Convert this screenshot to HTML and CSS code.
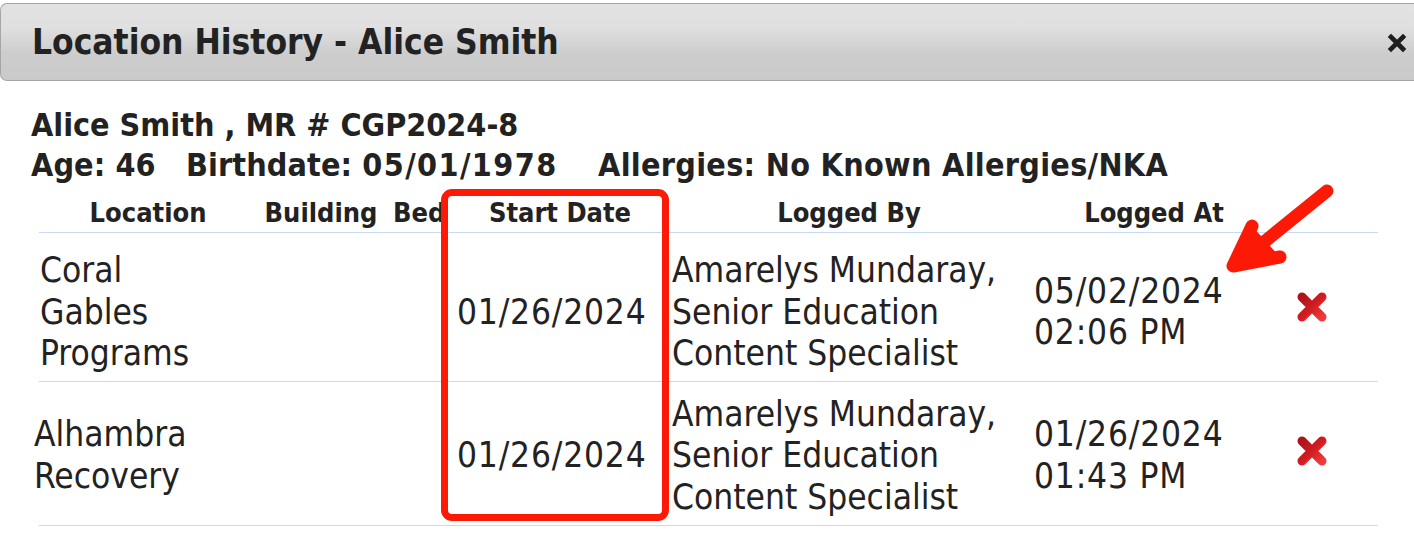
FILE: index.html
```html
<!DOCTYPE html>
<html lang="en">
<head>
<meta charset="utf-8">
<title>Location History - Alice Smith</title>
<link rel="stylesheet" href="styles.css">
</head>
<body>
<div class="dialog">
  <div class="titlebar">
    <span class="title">Location History - Alice Smith</span>
    <button class="close" type="button" aria-label="close">
      <svg width="20" height="20" viewBox="0 0 20 20"><path d="M4 4 L16 16 M16 4 L4 16" stroke="#1e1e1e" stroke-width="4.6" stroke-linecap="square" fill="none"/></svg>
    </button>
  </div>
  <div class="content">
    <div class="patient">
      <div class="pline">Alice Smith , MR # CGP2024-8</div>
      <div class="pline pline-info">Age: 46&nbsp;&nbsp;&nbsp;Birthdate: <span class="bnum">05/01/1978</span>&nbsp;&nbsp;&nbsp;&nbsp;<span class="allergy">Allergies: No Known Allergies/NKA</span></div>
    </div>
    <table class="history">
      <colgroup>
        <col class="c-loc"><col class="c-bld"><col class="c-bed"><col class="c-start"><col class="c-by"><col class="c-at"><col class="c-del">
      </colgroup>
      <thead>
        <tr>
          <th class="th-loc">Location</th>
          <th>Building</th>
          <th class="th-bed">Bed</th>
          <th>Start Date</th>
          <th>Logged By</th>
          <th>Logged At</th>
          <th></th>
        </tr>
      </thead>
      <tbody>
        <tr class="row-first">
          <td class="loc"><div class="loc-text">Coral<br>Gables<br>Programs</div></td>
          <td></td>
          <td></td>
          <td class="start"><span class="num">01/26/2024</span></td>
          <td class="by">Amarelys Mundaray,<br>Senior Education<br>Content Specialist</td>
          <td class="at"><span class="num">05/02/2024</span><br><span class="num">02:06 PM</span></td>
          <td class="del"><svg class="xicon" width="36" height="36" viewBox="0 0 36 36"><defs><linearGradient id="xg1" x1="0" y1="0" x2="1" y2="1"><stop offset="0" stop-color="#b0121a"/><stop offset="0.5" stop-color="#d01c22"/><stop offset="1" stop-color="#f03a3a"/></linearGradient></defs><path d="M8 8 L28 28 M28 8 L8 28" stroke="url(#xg1)" stroke-width="9" stroke-linecap="round" fill="none"/></svg></td>
        </tr>
        <tr>
          <td class="loc"><div class="loc-text loc-out">Alhambra<br>Recovery</div></td>
          <td></td>
          <td></td>
          <td class="start"><span class="num">01/26/2024</span></td>
          <td class="by">Amarelys Mundaray,<br>Senior Education<br>Content Specialist</td>
          <td class="at"><span class="num">01/26/2024</span><br><span class="num">01:43 PM</span></td>
          <td class="del"><svg class="xicon" width="36" height="36" viewBox="0 0 36 36"><defs><linearGradient id="xg2" x1="0" y1="0" x2="1" y2="1"><stop offset="0" stop-color="#b0121a"/><stop offset="0.5" stop-color="#d01c22"/><stop offset="1" stop-color="#f03a3a"/></linearGradient></defs><path d="M8 8 L28 28 M28 8 L8 28" stroke="url(#xg2)" stroke-width="9" stroke-linecap="round" fill="none"/></svg></td>
        </tr>
      </tbody>
    </table>
    <div class="highlight"></div>
    <svg class="arrow" width="160" height="120" viewBox="1210 170 160 120">
      <g fill="none" stroke="#fc1a06" stroke-width="13" stroke-linecap="round" stroke-linejoin="round">
        <path d="M1327 193 L1248 257"/>
        <path d="M1252 228 L1233 268 L1280 259"/>
      </g>
      <path d="M1252 228 L1233 268 L1280 259 Z" fill="#fc1a06"/>
    </svg>
  </div>
</div>
</body>
</html>
```

FILE: styles.css
```css
* { box-sizing: border-box; }

html, body {
  margin: 0;
  padding: 0;
  background: #ffffff;
  overflow: hidden;
}

body {
  font-family: "DejaVu Sans Condensed", "DejaVu Sans", Verdana, sans-serif;
  font-stretch: condensed;
  color: #222222;
}

.dialog {
  width: 1440px;
  padding-top: 3px;
  position: relative;
}

.titlebar {
  height: 78px;
  border: 1px solid #a6a6a6;
  border-right: none;
  border-radius: 7px 0 0 7px;
  background: linear-gradient(to bottom, #e2e2e2 0%, #e0e0e0 30%, #cdcdcd 65%, #cacaca 100%);
  display: flex;
  align-items: center;
  padding-left: 31px;
  padding-right: 13px;
  width: 1420px;
}

.title {
  font-weight: bold;
  font-size: 35px;
  color: #222222;
  flex: 1;
  padding-bottom: 1px;
}

.close {
  border: none;
  background: transparent;
  padding: 0;
  margin: 2px 0 0 0;
  width: 20px;
  height: 20px;
  display: flex;
  align-items: center;
  justify-content: center;
}

.content {
  position: relative;
  padding: 24px 0 0 0;
}

.patient {
  padding-left: 31px;
  font-weight: bold;
  font-size: 32px;
  line-height: 40px;
  white-space: nowrap;
}

.pline-info {
  letter-spacing: 0.1px;
}

.bnum {
  letter-spacing: 1.4px;
}

.allergy {
  letter-spacing: 0.3px;
}

.history {
  margin-left: 39px;
  width: 1339px;
  border-collapse: collapse;
  table-layout: fixed;
}

.c-loc { width: 215px; }
.c-bld { width: 134px; }
.c-bed { width: 62px; }
.c-start { width: 220px; }
.c-by { width: 358px; }
.c-at { width: 252px; }
.c-del { width: 98px; }

.history th {
  font-size: 27px;
  font-weight: bold;
  line-height: 32px;
  padding: 12px 0 3px;
  text-align: center;
  white-space: nowrap;
  border-bottom: 1px solid #c6daf6;
}

.history th.th-loc {
  padding-left: 3px;
}

.history th.th-bed {
  text-align: left;
  padding-left: 5px;
  overflow: hidden;
}

.history td {
  font-size: 35px;
  line-height: 41.5px;
  padding: 12px 0 7px;
  vertical-align: middle;
  border-bottom: 1px solid #c6daf6;
  white-space: nowrap;
}

.history tr.row-first td {
  padding-top: 17px;
  padding-bottom: 6px;
}

.num {
  letter-spacing: 0.8px;
}

.history td.loc {
  padding-left: 1px;
}

.loc-out {
  margin-left: -6px;
}

.history td.start {
  padding-left: 7px;
}

.history td.by {
  padding-left: 2px;
}

.history td.at {
  padding-left: 6px;
}

.history td.del {
  padding-left: 14px;
}

.xicon {
  display: block;
  margin-top: -10px;
}

.highlight {
  position: absolute;
  left: 441px;
  top: 108px;
  width: 228px;
  height: 332px;
  border: 7px solid #fc1a06;
  border-radius: 11px;
}

.arrow {
  position: absolute;
  left: 1210px;
  top: 87px;
}
```
